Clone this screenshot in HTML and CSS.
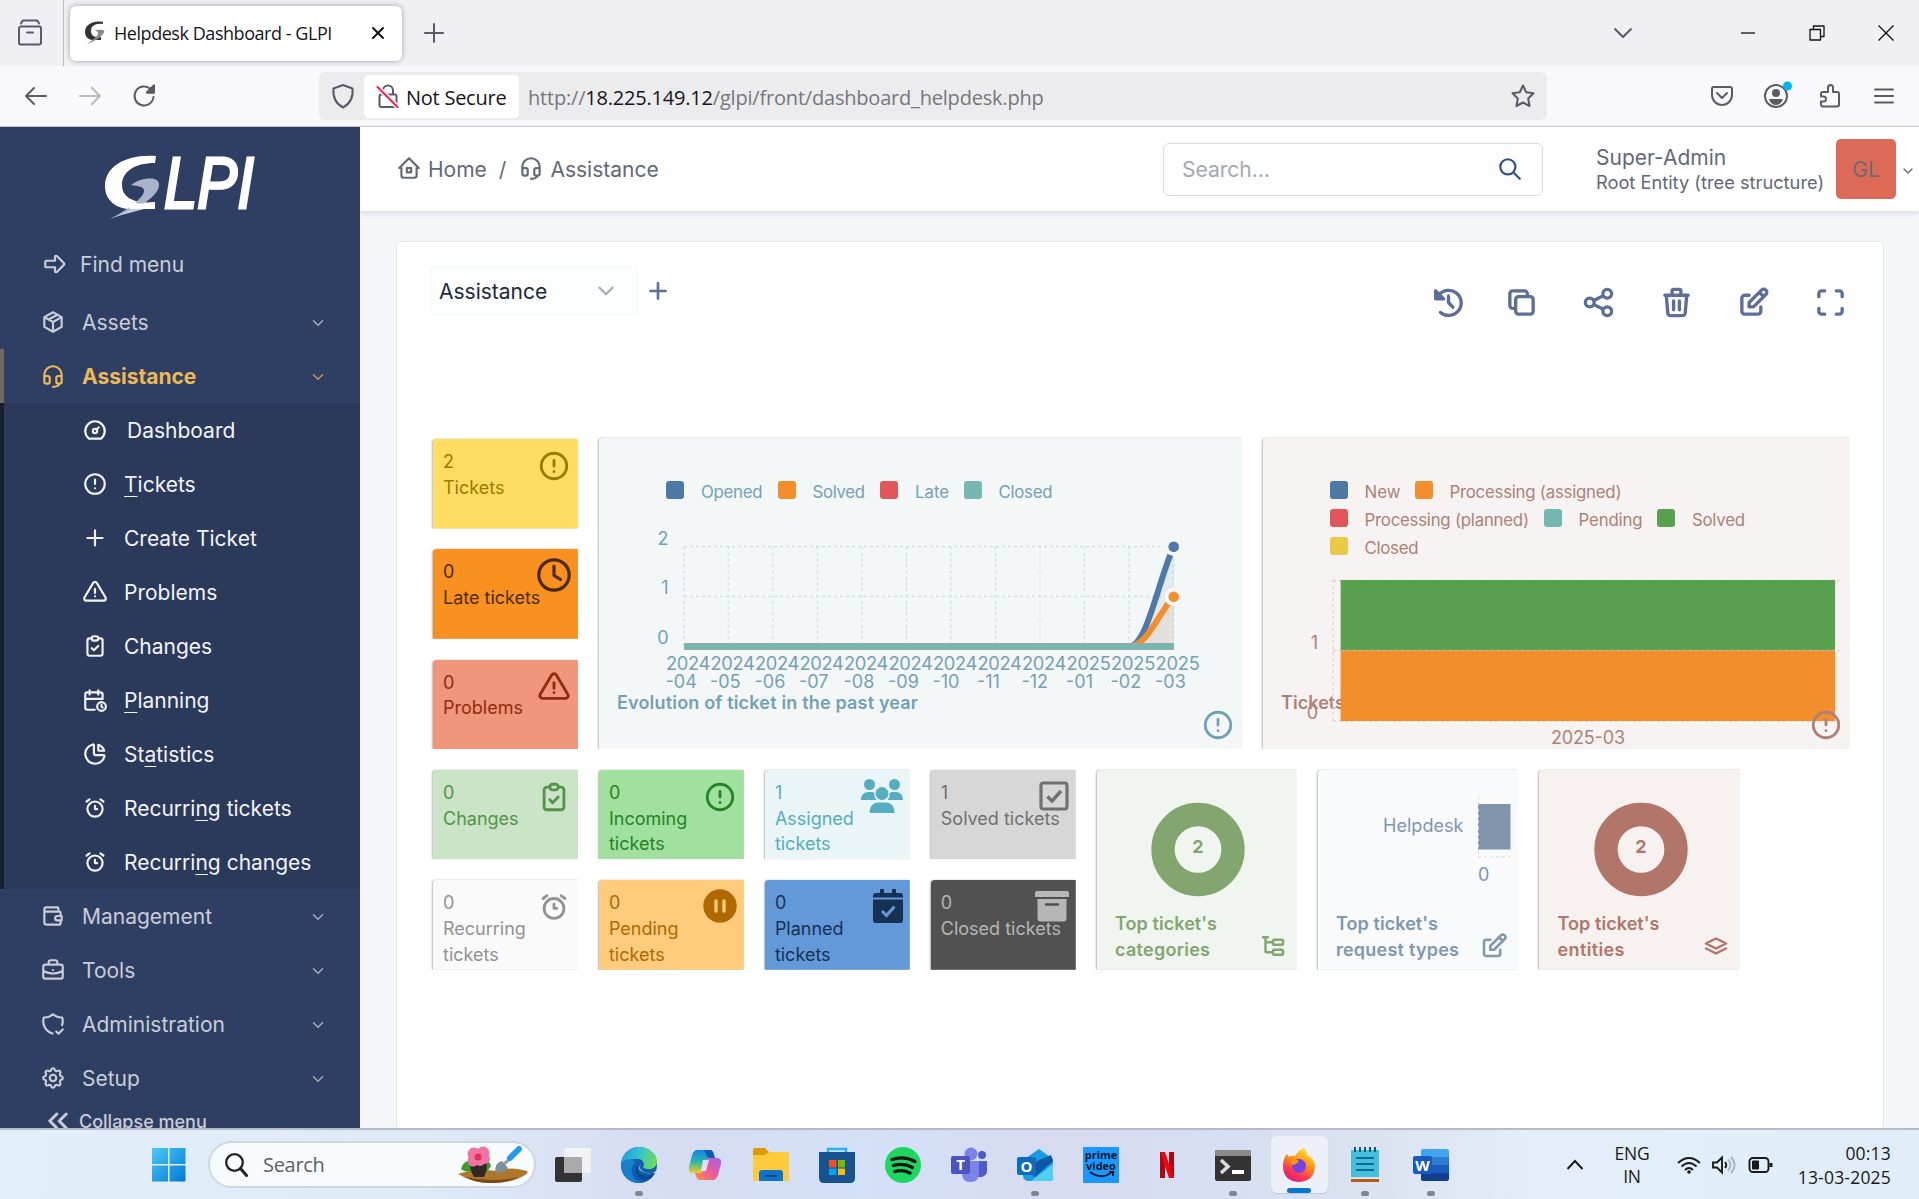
FILE: index.html
```html
<!DOCTYPE html>
<html lang="en">
<head>
<meta charset="utf-8">
<title>Helpdesk Dashboard - GLPI</title>
<link rel="stylesheet" href="styles.css">
</head>
<body>
<svg class="sprite" width="0" height="0" aria-hidden="true">
  <symbol id="arrow" viewBox="0 0 24 24"><path d="M4 9h8V5.4a1 1 0 0 1 1.7-.7l6.6 6.6a1 1 0 0 1 0 1.4l-6.6 6.6a1 1 0 0 1-1.7-.7V15H4a1 1 0 0 1-1-1v-4a1 1 0 0 1 1-1z"/></symbol>
  <symbol id="package" viewBox="0 0 24 24"><path d="M12 3l8 4.500v9L12 21l-8-4.500v-9zM12 12l8-4.500M12 12v9M12 12L4 7.500M16 5.250l-8 4.500"/></symbol>
  <symbol id="headset" viewBox="0 0 24 24"><path d="M4 14v-3a8 8 0 1 1 16 0v3M18 19c0 1.657-2.686 3-6 3M4 14a2 2 0 0 1 2-2h1a2 2 0 0 1 2 2v3a2 2 0 0 1-2 2H6a2 2 0 0 1-2-2zM15 14a2 2 0 0 1 2-2h1a2 2 0 0 1 2 2v3a2 2 0 0 1-2 2h-1a2 2 0 0 1-2-2z"/></symbol>
  <symbol id="gauge" viewBox="0 0 24 24"><path d="M10 13a2 2 0 1 0 4 0a2 2 0 1 0-4 0M13.450 11.550l2.050-2.050M6.400 20a9 9 0 1 1 11.200 0z"/></symbol>
  <symbol id="alert" viewBox="0 0 24 24"><path d="M3 12a9 9 0 1 0 18 0a9 9 0 1 0-18 0M12 8v4M12 16h.01"/></symbol>
  <symbol id="plus" viewBox="0 0 24 24"><path d="M12 5v14M5 12h14"/></symbol>
  <symbol id="triangle" viewBox="0 0 24 24"><path d="M12 9v4M10.363 3.591L2.257 17.125a1.914 1.914 0 0 0 1.636 2.871h16.214a1.914 1.914 0 0 0 1.636-2.870L13.637 3.590a1.914 1.914 0 0 0-3.274 0zM12 16h.01"/></symbol>
  <symbol id="clipboard" viewBox="0 0 24 24"><path d="M9 5H7a2 2 0 0 0-2 2v12a2 2 0 0 0 2 2h10a2 2 0 0 0 2-2V7a2 2 0 0 0-2-2h-2M9 5a2 2 0 0 1 2-2h2a2 2 0 0 1 0 4h-2a2 2 0 0 1-2-2M9 14l2 2l4-4"/></symbol>
  <symbol id="calendar" viewBox="0 0 24 24"><path d="M11.800 21H5a2 2 0 0 1-2-2V7a2 2 0 0 1 2-2h12a2 2 0 0 1 2 2v4M14 18a4 4 0 1 0 8 0a4 4 0 1 0-8 0M15 3v4M7 3v4M3 11h16M18 16.500V18l1 1"/></symbol>
  <symbol id="pie" viewBox="0 0 24 24"><path d="M10 3.200A9 9 0 1 0 20.800 14a1 1 0 0 0-1-1H13a2 2 0 0 1-2-2V4a.9.9 0 0 0-1-.8M15 3.500A9 9 0 0 1 20.500 9H16a1 1 0 0 1-1-1z"/></symbol>
  <symbol id="alarm" viewBox="0 0 24 24"><path d="M5 13a7 7 0 1 0 14 0a7 7 0 1 0-14 0M12 10v3h2M7 4L4.250 6M17 4l2.750 2"/></symbol>
  <symbol id="wallet" viewBox="0 0 24 24"><path d="M17 8V5a1 1 0 0 0-1-1H6a2 2 0 0 0 0 4h12a1 1 0 0 1 1 1v3m0 4v3a1 1 0 0 1-1 1H6a2 2 0 0 1-2-2V6M20 12v4h-4a2 2 0 0 1 0-4h4"/></symbol>
  <symbol id="briefcase" viewBox="0 0 24 24"><path d="M3 9a2 2 0 0 1 2-2h14a2 2 0 0 1 2 2v9a2 2 0 0 1-2 2H5a2 2 0 0 1-2-2zM8 7V5a2 2 0 0 1 2-2h4a2 2 0 0 1 2 2v2M12 12v.01M3 13a20 20 0 0 0 18 0"/></symbol>
  <symbol id="shieldcheck" viewBox="0 0 24 24"><path d="M11.460 20.846A12 12 0 0 1 3.500 6A12 12 0 0 0 12 3a12 12 0 0 0 8.500 3a12 12 0 0 1-.09 7.060M15 19l2 2l4-4"/></symbol>
  <symbol id="gear" viewBox="0 0 24 24"><path d="M10.325 4.317c.426-1.756 2.924-1.756 3.350 0a1.724 1.724 0 0 0 2.573 1.066c1.543-.94 3.310.826 2.370 2.370a1.724 1.724 0 0 0 1.065 2.572c1.756.426 1.756 2.924 0 3.350a1.724 1.724 0 0 0-1.066 2.573c.94 1.543-.826 3.310-2.370 2.370a1.724 1.724 0 0 0-2.572 1.065c-.426 1.756-2.924 1.756-3.350 0a1.724 1.724 0 0 0-2.573-1.066c-1.543.94-3.310-.826-2.370-2.370a1.724 1.724 0 0 0-1.065-2.572c-1.756-.426-1.756-2.924 0-3.350a1.724 1.724 0 0 0 1.066-2.573c-.94-1.543.826-3.310 2.370-2.370c1 .608 2.296.07 2.572-1.065zM9 12a3 3 0 1 0 6 0a3 3 0 1 0-6 0"/></symbol>
  <symbol id="collapse" viewBox="0 0 24 24"><path d="M11 6l-6 6l6 6M19 6l-6 6l6 6"/></symbol>
  <symbol id="chev" viewBox="0 0 24 24"><path d="M6 9l6 6l6-6"/></symbol>
  <symbol id="home" viewBox="0 0 24 24"><path d="M5 12H3l9-9l9 9h-2M5 12v7a2 2 0 0 0 2 2h10a2 2 0 0 0 2-2v-7M10 12h4v4h-4z"/></symbol>
  <symbol id="search" viewBox="0 0 24 24"><path d="M3 10a7 7 0 1 0 14 0a7 7 0 1 0-14 0M21 21l-6-6"/></symbol>
  <symbol id="history" viewBox="0 0 24 24"><path d="M5.300 7A8.600 8.600 0 1 1 6.500 18.800M12 7.500V12l3 3.200"/><path d="M3.200 4v5.500h5.500z" fill="currentColor"/></symbol>
  <symbol id="copy" viewBox="0 0 24 24"><path d="M8 10a2 2 0 0 1 2-2h8a2 2 0 0 1 2 2v8a2 2 0 0 1-2 2h-8a2 2 0 0 1-2-2zM16 8V6a2 2 0 0 0-2-2H6a2 2 0 0 0-2 2v8a2 2 0 0 0 2 2h2"/></symbol>
  <symbol id="share" viewBox="0 0 24 24"><path d="M3 12a3 3 0 1 0 6 0a3 3 0 1 0-6 0M15 6a3 3 0 1 0 6 0a3 3 0 1 0-6 0M15 18a3 3 0 1 0 6 0a3 3 0 1 0-6 0M8.700 10.700l6.600-3.400M8.700 13.300l6.600 3.400"/></symbol>
  <symbol id="trash" viewBox="0 0 24 24"><path d="M4 7h16M10 11v6M14 11v6M5 7l1 12a2 2 0 0 0 2 2h8a2 2 0 0 0 2-2l1-12M9 7V4a1 1 0 0 1 1-1h4a1 1 0 0 1 1 1v3"/></symbol>
  <symbol id="edit" viewBox="0 0 24 24"><path d="M9 7H6a2 2 0 0 0-2 2v9a2 2 0 0 0 2 2h9a2 2 0 0 0 2-2v-3M9 15h3l8.500-8.500a1.500 1.500 0 0 0-3-3L9 12zM16 5l3 3"/></symbol>
  <symbol id="maximize" viewBox="0 0 24 24"><path d="M4 8V6a2 2 0 0 1 2-2h2M4 16v2a2 2 0 0 0 2 2h2M16 4h2a2 2 0 0 1 2 2v2M16 20h2a2 2 0 0 0 2-2v-2"/></symbol>
  <symbol id="stack" viewBox="0 0 24 24"><path d="M12 6l-8 4l8 4l8-4zM4 14l8 4l8-4"/></symbol>
  <symbol id="subtask" viewBox="0 0 24 24"><path d="M6 9h6M4 5h4M6 5v11a1 1 0 0 0 1 1h5M12 8a1 1 0 0 1 1-1h6a1 1 0 0 1 1 1v2a1 1 0 0 1-1 1h-6a1 1 0 0 1-1-1zM12 16a1 1 0 0 1 1-1h6a1 1 0 0 1 1 1v2a1 1 0 0 1-1 1h-6a1 1 0 0 1-1-1z"/></symbol>
</svg>

<div class="tabbar">
  <svg class="fxview" width="26" height="30" viewBox="0 0 26 30"><path d="M6 1.500h14M4 7.500h18a2 2 0 0 1 2 2v14a2 2 0 0 1-2 2H4a2 2 0 0 1-2-2v-14a2 2 0 0 1 2-2zM10 13.500h6M4 4.500q1-3 3-3M22 4.500q-1-3-3-3"/></svg>
  <div class="tab">
    <svg width="22" height="24" viewBox="0 0 22 24"><path d="M19 1C9-1 1 4 1 11c0 5 4 8 8 8h8v-3c-7 1-10-2-10-6 0-5 4-8 12-7z" fill="#333"/><path d="M11 9c9-1 11 0 8 4-3 4-10 8-16 10 6-4 11-8 11-11 0-2-3-2-3-3z" fill="#8a8a8a"/></svg>
    <span class="tab-title">Helpdesk Dashboard - GLPI</span>
    <svg class="tab-close" width="14" height="14" viewBox="0 0 14 14"><path d="M2 2l10 10M12 2L2 12"/></svg>
  </div>
  <svg class="newtab" width="20" height="20" viewBox="0 0 20 20"><path d="M10 1v18M1 10h18"/></svg>
  <div class="winctl">
    <svg width="20" height="12" viewBox="0 0 20 12"><path d="M1.500 1.500L10 10l8.500-8.500"/></svg>
    <svg width="16" height="16" viewBox="0 0 16 16"><path d="M1 8h14"/></svg>
    <svg width="16" height="16" viewBox="0 0 16 16"><path d="M1 4.500h10.500V15H1zM4.500 4.500V1H15v10.500h-3.500"/></svg>
    <svg width="18" height="18" viewBox="0 0 18 18"><path d="M1.500 1.500l15 15M16.500 1.500l-15 15"/></svg>
  </div>
</div>

<div class="navbar">
  <svg class="nav-i" width="24" height="24" viewBox="0 0 24 24"><path d="M22 12H2M10 4l-8 8l8 8"/></svg>
  <svg class="nav-i dim" width="24" height="24" viewBox="0 0 24 24"><path d="M2 12h20M14 4l8 8l-8 8"/></svg>
  <svg class="nav-i" width="24" height="24" viewBox="0 0 24 24"><path d="M21.500 13a9.500 9.500 0 1 1-3-8M22 1.500v7h-7z"/><path d="M22 1.500v7h-7z" fill="#5b5b66"/></svg>
  <div class="urlbar">
    <svg class="shield" width="24" height="26" viewBox="0 0 24 26"><path d="M12 2l9.500 3.500c.8 8-2 15-9.500 19C4.500 20.500 1.700 13.500 2.500 5.500z"/></svg>
    <div class="chip">
      <svg width="24" height="26" viewBox="0 0 24 26"><path d="M7 11V7.500a5 5 0 0 1 10 0V11M5 11.500h14a1.500 1.500 0 0 1 1.500 1.500v9a2 2 0 0 1-2 2h-13a2 2 0 0 1-2-2v-9a1.500 1.500 0 0 1 1.500-1.500z"/><path d="M1.500 4l20 20" stroke="#f8f8f8" stroke-width="5"/><path class="slash" d="M1.500 4l20 20"/></svg>
      <span>Not Secure</span>
    </div>
    <span class="url">http://<b>18.225.149.12</b>/glpi/front/dashboard_helpdesk.php</span>
    <svg class="star" width="26" height="26" viewBox="0 0 26 26"><path d="M13 2.500l3.200 6.800 7.300 1-5.300 5.200 1.300 7.500L13 19.500 6.500 23l1.300-7.500L2.500 10.300l7.300-1z"/></svg>
  </div>
  <div class="nav-right">
    <svg width="24" height="24" viewBox="0 0 24 24"><path d="M4 3h16a2 2 0 0 1 2 2v6a10 10 0 0 1-20 0V5a2 2 0 0 1 2-2zM7 9l5 5l5-5"/></svg>
    <svg width="30" height="30" viewBox="0 0 30 30"><circle cx="14" cy="16" r="11"/><circle cx="14" cy="13" r="4" fill="#5b5b66" stroke="none"/><path d="M7 19h14q-2 6-7 6t-7-6z" fill="#5b5b66" stroke="none"/><circle cx="25.500" cy="6" r="4.500" fill="#00b3f4" stroke="none"/></svg>
    <svg width="24" height="26" viewBox="0 0 24 26"><path d="M4 23.500h15a2 2 0 0 0 2-2V11a2 2 0 0 0-2-2h-4V4.500a2.500 2.500 0 0 0-5 0V9H5a2 2 0 0 0-2 2v2.500h2.500a2.500 2.500 0 0 1 0 5H3v3a2 2 0 0 0 1 2z"/></svg>
    <svg width="20" height="20" viewBox="0 0 20 20"><path d="M1 3.500h18M1 10h18M1 16.500h18"/></svg>
  </div>
</div>

<div class="app">
  <nav class="side">
    <svg class="logo" width="154" height="66" viewBox="0 0 154 66"><path d="M53 1C22-1 2 12 2 31c0 15 12 23 26 23h24v-7C32 49 19 43 19 30 19 17 31 8 52 8z" fill="#fff"/><path d="M28 30c8-7 27-10 28-1 1 12-22 26-49 35C26 54 42 42 41 35c-1-4-7-4-13-5z" fill="#a9b3c9"/><path d="M7 64C17 60 26 56 34 50l10 3c-12 4-26 6-37 11z" fill="#c5ccda"/><path d="M28 47q10 3 24 0v7H26z" fill="#fff"/><text class="logotype" x="61" y="53" textLength="90" lengthAdjust="spacingAndGlyphs">LPI</text></svg>
    <div class="find"><svg class="ti"><use href="#arrow"/></svg><span>Find menu</span></div>
    <div class="item"><svg class="ti"><use href="#package"/></svg><span>Assets</span><svg class="cv"><use href="#chev"/></svg></div>
    <div class="item active"><svg class="ti"><use href="#headset"/></svg><span>Assistance</span><svg class="cv"><use href="#chev"/></svg></div>
    <div class="sub">
      <div class="subitem first"><svg class="ti"><use href="#gauge"/></svg><span>Dashboard</span></div>
      <div class="subitem"><svg class="ti"><use href="#alert"/></svg><span><u>T</u>ickets</span></div>
      <div class="subitem"><svg class="ti"><use href="#plus"/></svg><span>Create Ticket</span></div>
      <div class="subitem"><svg class="ti"><use href="#triangle"/></svg><span>Problems</span></div>
      <div class="subitem"><svg class="ti"><use href="#clipboard"/></svg><span>Changes</span></div>
      <div class="subitem"><svg class="ti"><use href="#calendar"/></svg><span><u>P</u>lanning</span></div>
      <div class="subitem"><svg class="ti"><use href="#pie"/></svg><span>St<u>a</u>tistics</span></div>
      <div class="subitem"><svg class="ti"><use href="#alarm"/></svg><span>Recurri<u>n</u>g tickets</span></div>
      <div class="subitem"><svg class="ti"><use href="#alarm"/></svg><span>Recurri<u>n</u>g changes</span></div>
    </div>
    <div class="item"><svg class="ti"><use href="#wallet"/></svg><span>Management</span><svg class="cv"><use href="#chev"/></svg></div>
    <div class="item"><svg class="ti"><use href="#briefcase"/></svg><span>Tools</span><svg class="cv"><use href="#chev"/></svg></div>
    <div class="item"><svg class="ti"><use href="#shieldcheck"/></svg><span>Administration</span><svg class="cv"><use href="#chev"/></svg></div>
    <div class="item"><svg class="ti"><use href="#gear"/></svg><span>Setup</span><svg class="cv"><use href="#chev"/></svg></div>
    <div class="collapse"><svg class="ti"><use href="#collapse"/></svg><span>Collapse menu</span></div>
  </nav>
  <div class="main">
    <header class="top">
      <div class="crumbs">
        <svg class="ti"><use href="#home"/></svg><span>Home</span><span class="sep">/</span><svg class="ti"><use href="#headset"/></svg><span>Assistance</span>
      </div>
      <div class="searchbox"><span>Search…</span><svg class="ti"><use href="#search"/></svg></div>
      <div class="user"><span>Super-Admin</span><small>Root Entity (tree structure)</small></div>
      <div class="avatar">GL</div>
      <svg class="ucv"><use href="#chev"/></svg>
    </header>
    <section class="card">
      <div class="bar">
        <div class="select"><span>Assistance</span><svg class="ti"><use href="#chev"/></svg></div>
        <svg class="ti add"><use href="#plus"/></svg>
        <div class="tools">
          <svg><use href="#history"/></svg><svg><use href="#copy"/></svg><svg><use href="#share"/></svg><svg><use href="#trash"/></svg><svg><use href="#edit"/></svg><svg><use href="#maximize"/></svg>
        </div>
      </div>
      <div class="grid">
        <div class="w a1 yellow"><span>2</span><span>Tickets</span><svg class="wi"><use href="#alert"/></svg></div>
        <div class="w a2 orange"><span>0</span><span>Late tickets</span><svg class="fa" viewBox="0 0 34 34"><circle cx="17" cy="17" r="15.200" fill="none" stroke="currentColor" stroke-width="3.200"/><path d="M17 8v9.500l6.500 4" fill="none" stroke="currentColor" stroke-width="3.200" stroke-linecap="round" stroke-linejoin="round"/></svg></div>
        <div class="w a3 salmon"><span>0</span><span>Problems</span><svg class="wi"><use href="#triangle"/></svg></div>
        <div class="w chart evo">
          <svg width="643" height="311" viewBox="599 438 643 311">
            <g class="leg"><rect x="666" y="481" width="18" height="18" rx="3" fill="#4e79a7"/><rect x="778" y="481" width="18" height="18" rx="3" fill="#f28e2b"/><rect x="880" y="481" width="18" height="18" rx="3" fill="#e15759"/><rect x="964" y="481" width="18" height="18" rx="3" fill="#76b7b2"/>
            <text x="701" y="498" textLength="61.500">Opened</text><text x="812.500" y="498" textLength="52.500">Solved</text><text x="915" y="498" textLength="34">Late</text><text x="998.500" y="498" textLength="54">Closed</text></g>
            <path class="gl" d="M684 546.500h489.500M684 596.500h489.500M684 546.500v100M728.500 546.500v100M773 546.500v100M817.500 546.500v100M862 546.500v100M906.500 546.500v100M951 546.500v100M995.500 546.500v100M1040 546.500v100M1084.500 546.500v100M1129 546.500v100M1173.500 546.500v100"/>
            <path d="M1129 646.500C1147 646.500 1158 581 1173.700 546.500v100z" fill="#4e79a7" fill-opacity=".1"/>
            <path d="M1129 646.500C1147 646.500 1158 614 1173.700 596.500v50z" fill="#f28e2b" fill-opacity=".1"/>
            <path d="M1129 646.500C1147 646.500 1158 581 1173.700 546.500" class="ln" stroke="#4e79a7"/>
            <path d="M1129 646.500C1147 646.500 1158 614 1173.700 596.500" class="ln" stroke="#f28e2b"/>
            <rect x="684" y="643" width="490" height="7" fill="#aaa39e"/><rect x="684" y="643.800" width="490" height="5.600" fill="#76b7b2"/>
            <g stroke="#f3f7f8" stroke-width="4"><circle cx="1173.700" cy="546.700" r="7.300" fill="#4e79a7"/><circle cx="1173.700" cy="596.700" r="7.300" fill="#f28e2b"/></g>
            <g class="ax"><text x="668.500" y="545" text-anchor="end">2</text><text x="668.500" y="594" text-anchor="end">1</text><text x="668.500" y="643.500" text-anchor="end">0</text></g>
            <g class="ax years"><text x="666" y="669.500" textLength="44.400">2024</text><text x="710.500" y="669.500" textLength="44.400">2024</text><text x="755" y="669.500" textLength="44.400">2024</text><text x="799.500" y="669.500" textLength="44.400">2024</text><text x="844" y="669.500" textLength="44.400">2024</text><text x="888.500" y="669.500" textLength="44.400">2024</text><text x="933" y="669.500" textLength="44.400">2024</text><text x="977.500" y="669.500" textLength="44.400">2024</text><text x="1022" y="669.500" textLength="44.400">2024</text><text x="1066.500" y="669.500" textLength="44.400">2025</text><text x="1111" y="669.500" textLength="44.400">2025</text><text x="1155.500" y="669.500" textLength="44.400">2025</text></g>
            <g class="ax"><text x="665.500" y="688">-04</text><text x="710" y="688">-05</text><text x="754.500" y="688">-06</text><text x="799" y="688">-07</text><text x="843.500" y="688">-08</text><text x="888" y="688">-09</text><text x="932.500" y="688">-10</text><text x="977" y="688">-11</text><text x="1021.500" y="688">-12</text><text x="1066" y="688">-01</text><text x="1110.500" y="688">-02</text><text x="1155" y="688">-03</text></g>
            <text class="ttl" x="617" y="709" textLength="301">Evolution of ticket in the past year</text>
          </svg>
          <svg class="wi br"><use href="#alert"/></svg>
        </div>
        <div class="w chart sts">
          <svg width="587" height="311" viewBox="1263 438 587 311">
            <g class="leg"><rect x="1330" y="481" width="18" height="18" rx="3" fill="#4e79a7"/><rect x="1415" y="481" width="18" height="18" rx="3" fill="#f28e2b"/><rect x="1330" y="509" width="18" height="18" rx="3" fill="#e15759"/><rect x="1544" y="509" width="18" height="18" rx="3" fill="#76b7b2"/><rect x="1657" y="509" width="18" height="18" rx="3" fill="#59a14f"/><rect x="1330" y="537" width="18" height="18" rx="3" fill="#edc949"/>
            <text x="1364.500" y="498" textLength="36">New</text><text x="1449.500" y="498" textLength="172">Processing (assigned)</text><text x="1364.500" y="526" textLength="164.500">Processing (planned)</text><text x="1578.500" y="526" textLength="64">Pending</text><text x="1692" y="526" textLength="53">Solved</text><text x="1364.500" y="554" textLength="54">Closed</text></g>
            <text class="ttl" x="1281" y="709" textLength="64">Tickets</text>
            <path class="gl pink" d="M1333 580.500h507M1333 650.500h507M1333 721h507M1333 580v141"/>
            <rect x="1340.600" y="580" width="494.500" height="70.500" fill="#59a14f"/><rect x="1340.600" y="650.500" width="494.500" height="70.500" fill="#f28e2b"/>
            <path class="gl mid" d="M1340.600 650.500h494.500"/>
            <g class="ax"><text x="1318" y="648.500" text-anchor="end">1</text><text x="1318" y="718.500" text-anchor="end">0</text><text x="1588" y="744" text-anchor="middle" textLength="74">2025-03</text></g>
          </svg>
          <svg class="wi br"><use href="#alert"/></svg>
        </div>
        <div class="w b1 green1"><span>0</span><span>Changes</span><svg class="wi"><use href="#clipboard"/></svg></div>
        <div class="w green2"><span>0</span><span>Incoming tickets</span><svg class="wi"><use href="#alert"/></svg></div>
        <div class="w aqua"><span>1</span><span>Assigned tickets</span><svg class="fa users" viewBox="0 0 42 34"><g fill="currentColor"><circle cx="8.500" cy="5.500" r="5.500"/><circle cx="33.500" cy="5.500" r="5.500"/><path d="M0 21c0-5 3-8 7-8h3c1.500 0 2.500.5 3.500 1-.5 3 .5 5 2 7z"/><path d="M42 21c0-5-3-8-7-8h-3c-1.500 0-2.500.5-3.500 1 .5 3-.5 5-2 7z"/><circle cx="21" cy="14.500" r="6.500"/><path d="M8.500 34c0-7 4-10.500 8.500-10.500h8c5 0 8.500 3.500 8.500 10.500z"/></g></svg></div>
        <div class="w grey"><span>1</span><span>Solved tickets</span><svg class="fa sq" viewBox="0 0 34 34"><rect x="4" y="4" width="26" height="26" rx="2.500" fill="none" stroke="currentColor" stroke-width="3.200"/><path d="M10.500 17.500l4.500 4.500l9-10" fill="none" stroke="currentColor" stroke-width="3.500"/></svg></div>
        <div class="w tall cat">
          <svg width="201" height="201" viewBox="1097 770.500 201 201"><circle cx="1198" cy="850" r="35" fill="none" stroke="#83a671" stroke-width="23.300"/><text class="num" x="1198" y="853.500" text-anchor="middle">2</text><text class="ttl" x="1115" y="930.500" textLength="102">Top ticket's</text><text class="ttl" x="1115" y="956.500" textLength="95">categories</text></svg>
          <svg class="wi br"><use href="#subtask"/></svg>
        </div>
        <div class="w tall req">
          <svg width="201" height="201" viewBox="1318 770.500 201 201"><rect x="1478" y="804.500" width="32.500" height="45.500" fill="#8094ab"/><path d="M1478.500 797v60M1478 857.500h33" stroke="#d5d8dc" stroke-dasharray="3 3" fill="none"/><g class="ax"><text x="1383" y="832.500" textLength="80.500">Helpdesk</text><text x="1478" y="881.500">0</text></g><text class="ttl" x="1336" y="930.500" textLength="102">Top ticket's</text><text class="ttl" x="1336" y="956.500" textLength="123">request types</text></svg>
          <svg class="wi br"><use href="#edit"/></svg>
        </div>
        <div class="w tall ent">
          <svg width="201" height="201" viewBox="1539 770.500 201 201"><circle cx="1641" cy="850" r="35" fill="none" stroke="#b1756a" stroke-width="23.300"/><text class="num" x="1641" y="853.500" text-anchor="middle">2</text><text class="ttl" x="1557.500" y="930.500" textLength="102">Top ticket's</text><text class="ttl" x="1557.500" y="956.500" textLength="67">entities</text></svg>
          <svg class="wi br"><use href="#stack"/></svg>
        </div>
        <div class="w b1 white"><span>0</span><span>Recurring tickets</span><svg class="wi"><use href="#alarm"/></svg></div>
        <div class="w amber"><span>0</span><span>Pending tickets</span><svg class="fa" viewBox="0 0 34 34"><circle cx="17" cy="17" r="16.700" fill="currentColor"/><path d="M13 12v10M21 12v10" stroke="#ffcb7d" stroke-width="3.400" stroke-linecap="round"/></svg></div>
        <div class="w blue"><span>0</span><span>Planned tickets</span><svg class="fa sq" viewBox="0 0 34 34"><path d="M2 10.500h30V31a3 3 0 0 1-3 3H5a3 3 0 0 1-3-3zM2 8.500V7a3 3 0 0 1 3-3h4V1.500a2 2 0 0 1 4 0V4h8V1.500a2 2 0 0 1 4 0V4h4a3 3 0 0 1 3 3v1.500z" fill="currentColor"/><path d="M11 22l4.500 4.500l8-9" fill="none" stroke="#6398d9" stroke-width="3"/></svg></div>
        <div class="w dark"><span>0</span><span>Closed tickets</span><svg class="fa" viewBox="0 0 34 34"><path d="M0 4a2 2 0 0 1 2-2h30a2 2 0 0 1 2 2v4H0zM2.500 10h29v19.500a3 3 0 0 1-3 3h-23a3 3 0 0 1-3-3z" fill="currentColor"/><path d="M11 15.500h12" stroke="#515151" stroke-width="2.500" stroke-linecap="round"/></svg></div>
      </div>
    </section>
  </div>
</div>

<footer class="taskbar">
  <svg class="win" width="36" height="36" viewBox="0 0 36 36"><defs><linearGradient id="wg" x1="0" y1="0" x2="1" y2="1"><stop offset="0" stop-color="#4cc9fb"/><stop offset="1" stop-color="#0078d4"/></linearGradient></defs><path d="M1 1h16v16H1zM18.500 1h16v16h-16zM1 18.500h16v16H1zM18.500 18.500h16v16h-16z" fill="url(#wg)"/></svg>
  <div class="pill">
    <svg width="26" height="26" viewBox="0 0 26 26"><circle cx="11.500" cy="10.500" r="8.300" fill="none" stroke="#222" stroke-width="2.300"/><path d="M17.500 16.500l6 7" stroke="#222" stroke-width="3" stroke-linecap="round"/></svg>
    <span>Search</span>
    <svg class="flower" width="72" height="38" viewBox="0 0 72 38"><path d="M1 28q18-6 38-3q16-5 31 0q2 2-2 4q-12 8-32 8T1 28z" fill="#b0762c"/><path d="M8 31q26 6 54 0q-12 6-28 6T8 31z" fill="#7b4a14"/><path d="M4 23q2-9 12-9l1 10q-7 4-13-1zM24 14q9-1 10 6l-4 6-7-4z" fill="#3f9a2d"/><path d="M13 17h17q0 8-3 14H17q-4-6-4-14z" fill="#33282a"/><g fill="#f272a4"><circle cx="17" cy="8" r="6.500"/><circle cx="26" cy="7" r="6.500"/><circle cx="28" cy="13" r="5"/><circle cx="16" cy="15" r="5.500"/><circle cx="23" cy="15" r="5"/></g><circle cx="21" cy="11" r="3.500" fill="#e0305d"/><path d="M38 27q0-11 7-12l6 7q-2 4-13 5z" fill="#7d8d99"/><path d="M47 18l8-7" stroke="#8fa0ad" stroke-width="3"/><path d="M53 12l9-9" stroke="#279bea" stroke-width="6" stroke-linecap="round"/></svg>
  </div>
  <div class="apps">
    <div><svg viewBox="0 0 36 36"><rect x="0" y="10" width="27" height="25" rx="2" fill="#333"/><rect x="9" y="1" width="27" height="25" rx="2" fill="#f4f4f4" fill-opacity=".85"/><path d="M9 10h18v16H9z" fill="#aaa"/></svg></div>
    <div class="run"><svg viewBox="0 0 36 36"><defs><linearGradient id="eg" x1="0" y1=".2" x2="1" y2=".4"><stop offset="0" stop-color="#1b9de2"/><stop offset=".5" stop-color="#35c1cf"/><stop offset="1" stop-color="#6bdc5a"/></linearGradient></defs><circle cx="18" cy="18" r="18" fill="#0f5fae"/><path d="M0 17C1 7 9 0 18 0c10 0 18 7 18 14 0 7-6 10-14 7 3-6-2-10-7-9-8 0-13 3-15 5z" fill="url(#eg)"/><path d="M14 15c-7 8-3 19 8 20.500C10 38 0 30 0 18c1-6 11-7 14-3z" fill="#1680ce"/><path d="M17 18c-3 9 7 14 17 8q-3 5-7 7C17 34 11 24 17 18z" fill="#0b4a94"/><path d="M20 17q-4 7 6 9q6 1 9-2l2 2-9 0q-14-1-8-9z" fill="#dbe3f5"/></svg></div>
    <div><svg viewBox="0 0 36 36"><defs><linearGradient id="c1" x1="0" y1="0" x2="0" y2="1"><stop offset="0" stop-color="#1183e8"/><stop offset=".5" stop-color="#2ab6a8"/><stop offset="1" stop-color="#f2cb25"/></linearGradient><linearGradient id="c2" x1="1" y1="0" x2="0" y2="1"><stop offset="0" stop-color="#a561f0"/><stop offset=".5" stop-color="#e75a9d"/><stop offset="1" stop-color="#ff9145"/></linearGradient></defs><path d="M10 3h13q3 0 4 5l1 3h-4q-4 0-5 4l-2 8q-1 3-5 3H6q-5 0-4-6L5 8q2-5 5-5z" fill="url(#c1)"/><path d="M26 33H13q-3 0-4-4l-1-3h4q4 0 5-4l2-8q1-3 5-3h6q5 0 4 6l-3 11q-2 5-5 5z" fill="url(#c2)"/><path d="M16 13h6l-3 11h-5z" fill="#dbe3f8"/><path d="M17 3h6q3 0 4 5l1 3h-5q-3 0-4-4z" fill="#1556b5"/></svg></div>
    <div><svg viewBox="0 0 36 36"><path d="M0 3q0-2 2-2h10l4 4v6H0z" fill="#dd9a06"/><path d="M0 8h12l4-3h20v29H0z" fill="#fecb3e"/><path d="M6 34V26q0-3 3-3h18q3 0 3 3v8z" fill="#1173c8"/><path d="M12 29h12" stroke="#0b4b8b" stroke-width="2"/></svg></div>
    <div><svg viewBox="0 0 36 36"><path d="M9 8V2h18v6" fill="none" stroke="#28b3ef" stroke-width="2.500"/><path d="M0 5h36v26q0 5-5 5H5q-5 0-5-5z" fill="#17538f"/><path d="M10 13h7.500v7.500H10z" fill="#f25022"/><path d="M19 13h7v7.500h-7z" fill="#7fba00"/><path d="M10 21.500h7.500V28H10z" fill="#00a4ef"/><path d="M19 21.500h7V28h-7z" fill="#ffb900"/></svg></div>
    <div><svg viewBox="0 0 36 36"><circle cx="18" cy="18" r="18" fill="#1ed760"/><path d="M7 12.500q12-4 23 2M8.500 18.500q10-3 19 2M10 24.500q8-2.500 15 1.500" fill="none" stroke="#111" stroke-width="3.300" stroke-linecap="round"/></svg></div>
    <div><svg viewBox="0 0 36 36"><circle cx="20" cy="7" r="6.500" fill="#7b83eb"/><circle cx="31" cy="8" r="4" fill="#5059c9"/><path d="M26 14h10v10q0 5-6 6h-4z" fill="#5059c9"/><path d="M11 14h17v12q0 9-8.500 9T11 26z" fill="#7b83eb"/><rect x="0" y="9" width="19" height="18" rx="2" fill="#4b53bc"/><text x="9.500" y="23" text-anchor="middle" class="glyph">T</text></svg></div>
    <div class="run"><svg viewBox="0 0 36 36"><path d="M6 13L22 2l14 10v19q0 3-3 3H12q-6 0-6-6z" fill="#1a9be2"/><path d="M6 20L34 8l2 6-18 16z" fill="#0d56a8"/><path d="M14 34l22-17v14q0 3-3 3z" fill="#4fd0f1"/><rect x="0" y="10" width="19" height="18" rx="2" fill="#0f6cbd"/><text x="9.500" y="24.500" text-anchor="middle" class="glyph">O</text></svg></div>
    <div><svg viewBox="0 0 36 36"><path d="M0 0h36v36H0z" fill="#1a98ff"/><text x="18" y="11.500" text-anchor="middle" class="pv">prime</text><text x="18" y="22.500" text-anchor="middle" class="pv">video</text><path d="M7 25q11 8 21 1M26 25h4v4" fill="none" stroke="#0b1a2c" stroke-width="2"/></svg></div>
    <div><svg viewBox="0 0 36 36"><path d="M11 5h5v26h-5zM20 5h5v26h-5z" fill="#b1060f"/><path d="M11 5h5l9 26h-5z" fill="#e50914"/></svg></div>
    <div class="run"><svg viewBox="0 0 36 36"><rect y="3" width="36" height="31" rx="2" fill="#333"/><path d="M0 9V5q0-2 2-2h32q2 0 2 2v4z" fill="#8b8b8b"/><path d="M6 13l7 6.500L6 26" fill="none" stroke="#ddd" stroke-width="3.500"/><path d="M17 23h12v4H17z" fill="#fff"/></svg></div>
    <div class="run on"><svg viewBox="0 0 36 36"><defs><linearGradient id="ff" x1=".8" y1="0" x2=".3" y2="1"><stop offset="0" stop-color="#fff44f"/><stop offset=".4" stop-color="#ff980e"/><stop offset=".75" stop-color="#ff3750"/><stop offset="1" stop-color="#e31587"/></linearGradient></defs><path d="M23 1q3 3 4 8q6 2 7 9q0 16-16 17Q2 34 2 19q0-7 4-12l2 3q3-2 6-1q4-7 9-8z" fill="url(#ff)"/><circle cx="18" cy="19" r="7" fill="#7542e5"/><path d="M8 13q5-2 10 1q-2 3-6 4q-3-1-4-5z" fill="#ff980e"/></svg></div>
    <div class="run"><svg viewBox="0 0 36 36"><path d="M4 3h28v27H4z" fill="#45bfe0"/><path d="M4 32h28v3H4z" fill="#b55d12"/><path d="M8 0v5M13 0v5M18 0v5M23 0v5M28 0v5" stroke="#0d5a78" stroke-width="2"/><path d="M9 11h18M9 17h18M9 23h18" stroke="#0d6a8c" stroke-width="2"/></svg></div>
    <div class="run"><svg viewBox="0 0 36 36"><path d="M8 4q0-2 2-2h24q2 0 2 2v6H8z" fill="#41a5ee"/><path d="M8 10h28v8H8z" fill="#2b7cd3"/><path d="M8 18h28v8H8z" fill="#185abd"/><path d="M8 26h28v6q0 2-2 2H10q-2 0-2-2z" fill="#103f91"/><rect y="9" width="19" height="18" rx="2" fill="#185abd"/><text x="9.500" y="23.500" text-anchor="middle" class="glyph">W</text></svg></div>
  </div>
  <div class="tray">
    <svg width="18" height="12" viewBox="0 0 18 12"><path d="M1.500 10L9 2l7.500 8"/></svg>
    <div class="lang"><span>ENG</span><span>IN</span></div>
    <svg class="wifi" width="26" height="20" viewBox="0 0 26 20"><path d="M2 8q11-10 22 0M5.500 11.500q7.500-7 15 0M9 15q4-4 8 0"/><circle cx="13" cy="17" r="1.800" fill="#1a1a1a" stroke="none"/></svg>
    <svg class="spk" width="26" height="20" viewBox="0 0 26 20"><path d="M2 7.500h4l5-5v15l-5-5H2zM14 7q2.500 3 0 6"/><path d="M17 4.500q5 5.500 0 11M20 2q7 8 0 16" stroke="#aab3bf"/></svg>
    <svg class="bat" width="26" height="18" viewBox="0 0 26 18"><rect x="1.500" y="2" width="19" height="14" rx="3.500"/><path d="M4.500 5h6v8h-6z" fill="#1a1a1a" stroke-width="1"/><path d="M23 7v4" stroke-width="3"/></svg>
    <div class="clock"><span>00:13</span><span>13-03-2025</span></div>
  </div>
</footer>
</body>
</html>
```
FILE: styles.css
```css
* { box-sizing: border-box; }
body {
  margin: 0; width: 1919px; height: 1199px; overflow: hidden;
  display: flex; flex-direction: column;
  font-family: Inter, "Liberation Sans", sans-serif; font-size: 21px; color: #626976;
}
svg { display: block; flex: none; }
.sprite { position: absolute; }
.ti, .cv, .ucv, .wi, .tools svg {
  width: 26px; height: 26px; fill: none; stroke: currentColor; stroke-width: 2;
  stroke-linecap: round; stroke-linejoin: round;
}

/* browser chrome */
.tabbar, .navbar, .taskbar { font-family: "Open Sans", "Noto Sans", sans-serif; }
.tabbar { height: 66px; flex: none; background: #f0eff4; display: flex; align-items: center; }
.tabbar svg, .navbar svg { fill: none; stroke: #5b5b66; stroke-width: 2; stroke-linecap: round; stroke-linejoin: round; }
.fxview { margin: 2px 20px 0 17px; }
.tab {
  width: 332px; height: 55px; margin-left: 7px; padding: 0 17px 0 14px; background: #fff; border-radius: 6px;
  box-shadow: 0 0 5px rgba(0,0,0,.35); display: flex; align-items: center; position: relative;
}
.tabbar .tab svg:first-child { stroke: none; }
.tab::before { content: ""; position: absolute; left: -7px; top: -6px; height: 66px; border-left: 1px solid #bcbcc4; }
.tab-title { margin-left: 8px; font-size: 18px; letter-spacing: -.45px; color: #15141a; white-space: nowrap; }
.tabbar .tab-close { margin-left: auto; stroke: #15141a; }
.newtab { margin-left: 22px; }
.winctl { margin-left: auto; display: flex; align-items: center; padding-right: 24px; }
.winctl svg { stroke: #111; stroke-width: 1.3; stroke-linecap: butt; }
.winctl svg:nth-child(1) { margin-right: 107px; stroke: #5b5b66; stroke-width: 2; }
.winctl svg:nth-child(2) { margin-right: 53px; }
.winctl svg:nth-child(3) { margin-right: 52px; }

.navbar { height: 61px; flex: none; background: #f9f9fb; border-bottom: 1px solid #c9c9cd; display: flex; align-items: center; padding-left: 24px; }
.nav-i { margin-right: 30px; }
.dim { opacity: .4; }
.urlbar { width: 1228px; height: 48px; margin-left: 133px; background: #ececee; border-radius: 6px; display: flex; align-items: center; font-size: 20px; }
.urlbar span { padding-top: 2px; }
.shield { margin-left: 12px; }
.chip { width: 155px; height: 43px; margin-left: 9px; padding-left: 12px; background: #fff; border-radius: 5px; display: flex; align-items: center; gap: 6px; color: #15141a; letter-spacing: -.25px; white-space: nowrap; }
.navbar .slash { stroke: #e22850; }
.url { margin-left: 9px; color: #77777d; white-space: nowrap; letter-spacing: -.2px; }
.url b { font-weight: 400; color: #15141a; }
.star { margin-left: auto; margin-right: 11px; }
.nav-right { margin-left: auto; padding-right: 25px; display: flex; align-items: center; }
.nav-right svg:nth-child(1) { margin-right: 28px; }
.nav-right svg:nth-child(2) { margin-right: 26px; margin-top: -3px; }
.nav-right svg:nth-child(3) { margin-right: 32px; }

/* app frame */
.app { height: 1001px; flex: none; display: flex; overflow: hidden; }
.side { width: 360px; flex: none; background: #2f3f64; color: #c8cdd8; display: flex; flex-direction: column; }
.logo { margin: 28px 0 0 103px; overflow: visible; }
.logotype { font: italic 400 72px "Liberation Sans", sans-serif; fill: #fff; stroke: #fff; stroke-width: 3px; }
.find { height: 54px; flex: none; margin-top: 16px; padding-left: 42px; display: flex; align-items: center; gap: 12px; }
.find + .item { margin-top: 4px; }
.item { height: 54px; flex: none; padding: 0 33px 0 40px; display: flex; align-items: center; gap: 16px; }
.cv { width: 18px; height: 18px; margin-left: auto; opacity: .75; margin-top: 2px; }
.active { color: #edb957; font-weight: 700; border-left: 4px solid #706a66; padding-left: 36px; }
.sub { flex: none; background: #2b395a; border-left: 4px solid #161e30; color: #f1f3f7; }
.subitem { height: 54px; padding-left: 78px; display: flex; align-items: center; gap: 16px; }
.subitem.first { gap: 19px; }
u { text-decoration-thickness: 1px; text-underline-offset: 4px; }
.collapse { height: 34px; flex: none; padding-left: 44px; display: flex; align-items: center; gap: 7px; font-size: 18px; margin-top: -1px; font-weight: 500; }
.collapse .ti { width: 28px; height: 28px; stroke-width: 2.600; }

.main { flex: 1; background: #f5f7fb; display: flex; flex-direction: column; }
.top { height: 84px; flex: none; background: #fff; box-shadow: 0 2px 6px rgba(30,41,59,.14); display: flex; align-items: center; padding-left: 36px; }
.crumbs { display: flex; align-items: center; width: 767px; padding-top: 1px; }
.crumbs span { margin-left: 6px; }
.crumbs .sep { margin: 0 12px 0 12px; }
.crumbs .ti { margin-top: -4px; }
.searchbox { width: 380px; height: 53px; border: 1px solid #d9dce1; border-radius: 6px; background: #fdfdfe; display: flex; align-items: center; justify-content: space-between; padding: 0 19px 0 18px; color: #a5a9b1; }
.searchbox .ti { color: #2f4f8f; }
.user { margin-left: 53px; width: 240px; padding-top: 2px; display: flex; flex-direction: column; line-height: 25px; white-space: nowrap; }
.user small { font-size: 18.250px; }
.avatar { width: 60px; height: 60px; flex: none; background: #dd6a56; border-radius: 5px; color: #6d6a70; display: flex; align-items: center; justify-content: center; }
.ucv { width: 16px; height: 16px; margin: 4px 0 0 4px; }
.card { flex: 1; margin: 30px 35px 0 36px; border: 1px solid #e3e6eb; border-bottom: 0; border-radius: 5px 5px 0 0; background: #fff; padding: 24px 0 0 33px; }
.bar { display: flex; height: 50px; align-items: center; }
.select { width: 208px; height: 50px; border: 2px solid #f8fafb; border-radius: 4px; background: #fcfdfd; display: flex; align-items: center; justify-content: space-between; padding: 0 17px 0 7px; color: #1e293b; }
.select .ti { color: #a5a9b1; }
.add { margin-left: 7px; color: #5d719b; stroke-width: 2.500; }
.tools { display: flex; margin: 22px 0 0 760px; gap: 42.200px; color: #5d6f96; }
.tools svg { width: 35px; height: 35px; stroke-width: 2.300; }
.tools svg:nth-child(2) { margin-left: -4px; }

/* dashboard */
.grid {
  margin: 123px 0 0 3px; display: grid; grid-template-columns: repeat(26, 34.320px); grid-auto-rows: 89.500px;
  column-gap: 21px; row-gap: 20.800px;
}
.w {
  grid-column: span 3; position: relative; padding: 10px 10px 0; border-radius: 4px 0 0 0; font-size: 18px; line-height: 25.700px;
  box-shadow: -1px 0 2px rgba(0,0,0,.28); clip-path: inset(-2px 0 0 -5px); display: flex; flex-direction: column;
}
.w span { max-width: 125px; }
.a1, .a2, .a3, .b1 { grid-column: 1 / span 3; }
.a1 { grid-row: 1; } .a2 { grid-row: 2; } .a3 { grid-row: 3; }
.w.chart, .w.tall { padding: 0; }
.w.evo { grid-column: 4 / span 12; grid-row: 1 / span 3; margin-top: -1px; background: #f3f7f8; color: #73a1b3; }
.w.sts { grid-column: 16 / span 11; grid-row: 1 / span 3; margin-top: -1px; background: #f7f3f2; color: #ae8178; }
.w.tall { grid-column: span 4; grid-row: span 2; }
.wi { position: absolute; right: 7px; top: 10px; width: 34px; height: 34px; }
.wi.br { top: auto; bottom: 7px; }
.tall .wi.br { width: 30px; height: 30px; right: 9px; bottom: 9px; }
.fa { position: absolute; right: 7px; top: 9px; width: 34px; height: 34px; }
.fa.sq { right: 5px; }
.fa.users { width: 42px; right: 7px; }
.yellow { background: #ffdc64; color: #9a7b00; }
.orange { background: #f99120; color: #4d2900; }
.salmon { background: #f0967b; color: #8f2d10; }
.green1 { background: #cbe3c6; color: #54944a; }
.green2 { background: #a0e19d; color: #27832a; }
.aqua { background: #e9f5f7; color: #57adc0; }
.grey { background: #d7d7d7; color: #717171; }
.white { background: #fafafa; color: #929292; }
.amber { background: #ffcb7d; color: #b06900; }
.blue { background: #6398d9; color: #173155; }
.dark { background: #515151; color: #b6b6b6; }
.cat { background: #f0f5ef; color: #83a671; }
.req { background: #f9fafc; color: #7f97b0; }
.ent { background: #f7f1f0; color: #b1756a; }
text { fill: currentColor; }
.leg text { font-size: 16.800px; }
.ax text { font-size: 18px; }
.years text { font-size: 18.300px; }
.ttl { font-size: 18px; font-weight: 600; }
.num { font-size: 18px; font-weight: 700; }
.gl { fill: none; stroke: #cfe3e6; stroke-width: 1.3; stroke-dasharray: 3 3; }
.gl.pink { stroke: #e6d3d3; }
.gl.mid { stroke: #c9b98a; }
.ln { fill: none; stroke-width: 6; }

/* taskbar */
.taskbar { height: 71px; flex: none; border-top: 2px solid #b3bbc7; background: linear-gradient(90deg, #e2eef8 0, #dfeaf7 22%, #d6dcf1 35%, #d3e1f9 45%, #d8daee 56%, #d6def3 62%, #dbe3f0 72%, #e3eef8 80%, #e0edf8 100%); display: flex; align-items: center; color: #1a1a1a; }
.win { margin-left: 151px; }
.pill { width: 328px; height: 47px; margin-left: 21px; border-radius: 24px; border: 2px solid #cdd8e6; background: #f8fbfe; display: flex; align-items: center; padding: 0 5px 0 13px; font-size: 20px; color: #5c6066; }
.pill span { margin-left: 14px; letter-spacing: -.3px; }
.flower { margin-left: auto; }
.apps { display: flex; margin-left: 3.500px; }
.apps div { width: 66.050px; height: 57px; display: flex; align-items: center; justify-content: center; position: relative; }
.apps svg { width: 36px; height: 36px; }
.run::after { content: ""; position: absolute; bottom: -3px; left: 29px; width: 8px; height: 5px; border-radius: 3px; background: #7f868f; }
.apps .on { width: 57px; margin: 0 4.500px; background: #edf0f8; border-radius: 6px; box-shadow: 0 1px 1px #c3cad8; }
.on::after { left: 16px; width: 24px; bottom: 0; background: #0078d4; }
.glyph { font-size: 15px; font-weight: 700; fill: #fff; }
.pv { font-size: 11px; font-weight: 700; fill: #0b1a2c; }
.tray { margin-left: auto; padding-right: 28px; display: flex; align-items: center; font-size: 17.500px; }
.tray svg { fill: none; stroke: #1a1a1a; stroke-width: 1.900; }
.lang, .clock { display: flex; flex-direction: column; line-height: 23px; letter-spacing: -.2px; }
.lang { width: 50px; margin-left: 23px; align-items: center; }
.clock { width: 99px; margin: 0 0 0 18px; line-height: 24px; align-items: flex-end; white-space: nowrap; letter-spacing: .2px; }
.wifi { margin-left: 19px; }
.spk { margin-left: 9px; }
.bat { margin-left: 11px; }
```
